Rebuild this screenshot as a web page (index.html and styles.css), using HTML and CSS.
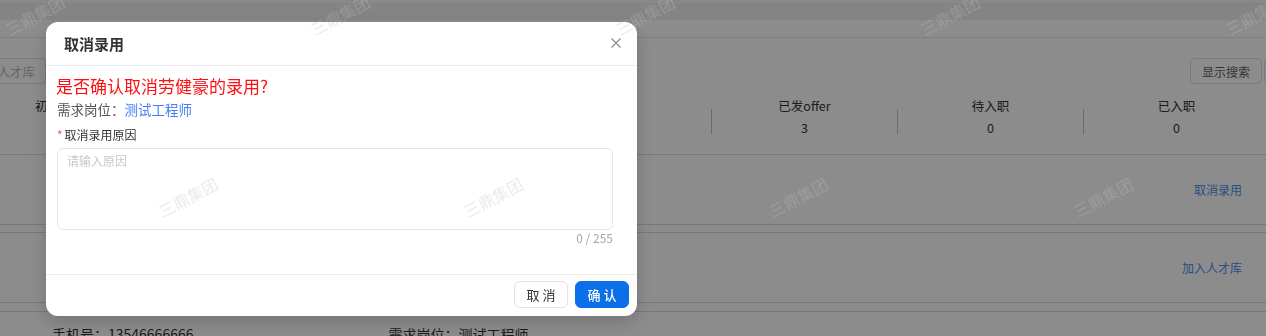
FILE: index.html
```html
<!doctype html>
<html>

<head>
    <meta charset="utf-8">
    <link rel="stylesheet" href="styles.css">
</head>

<body>
    <div class="page">
        <div class="topbar"></div>
        <div class="crumbs"></div>

        <div class="panel">
            <div class="search-row">
                <div class="search-input"><span>请输入人才库</span></div>
                <div class="search-tools">
                    <button class="btn-plain">显示搜索</button>
                    <button class="btn-plain">刷新</button>
                </div>
            </div>
            <div class="stats">
                <div class="stat">
                    <div class="stat-body"><div class="stat-label">初筛通过</div><div class="stat-num">5</div></div>
                </div>
                <div class="stat">
                    <span class="stat-line"></span>
                    <div class="stat-body"><div class="stat-label">复试通过</div><div class="stat-num">4</div></div>
                </div>
                <div class="stat">
                    <span class="stat-line"></span>
                    <div class="stat-body"><div class="stat-label">终试通过</div><div class="stat-num">3</div></div>
                </div>
                <div class="stat">
                    <span class="stat-line"></span>
                    <div class="stat-body"><div class="stat-label">面试</div><div class="stat-num">0</div></div>
                </div>
                <div class="stat">
                    <span class="stat-line"></span>
                    <div class="stat-body"><div class="stat-label">已发offer</div><div class="stat-num">3</div></div>
                </div>
                <div class="stat">
                    <span class="stat-line"></span>
                    <div class="stat-body"><div class="stat-label">待入职</div><div class="stat-num">0</div></div>
                </div>
                <div class="stat">
                    <span class="stat-line"></span>
                    <div class="stat-body"><div class="stat-label">已入职</div><div class="stat-num">0</div></div>
                </div>
            </div>
        </div>

        <div class="card">
            <a class="card-link">取消录用</a>
        </div>
        <div class="card">
            <a class="card-link">加入人才库</a>
        </div>
        <div class="card card-info">
            <span class="info-phone">手机号：13546666666</span>
            <span class="info-job">需求岗位：测试工程师</span>
        </div>
    </div>

    <div class="mask"></div>

    <div class="dialog">
        <div class="dialog-head">
            <span class="dialog-title">取消录用</span>
            <svg class="dialog-close" width="10" height="10" viewBox="0 0 10 10">
                <path d="M0.5 0.5 L9.5 9.5 M9.5 0.5 L0.5 9.5" stroke="#8c8c8c" stroke-width="1.2" fill="none" />
            </svg>
        </div>
        <div class="dialog-body">
            <div class="confirm-title">是否确认取消劳健豪的录用?</div>
            <div class="confirm-job">需求岗位：<span class="job-name">测试工程师</span></div>
            <div class="field-label"><span class="required">*</span>取消录用原因</div>
            <textarea class="reason" placeholder="请输入原因"></textarea>
            <div class="counter">0 / 255</div>
        </div>
        <div class="dialog-foot">
            <button class="btn-cancel">取 消</button>
            <button class="btn-ok">确 认</button>
        </div>
    </div>

    <div class="watermark">
        <span class="wm" style="left: 3px; top: 5px">三鼎集团</span>
        <span class="wm" style="left: 308px; top: 5px">三鼎集团</span>
        <span class="wm" style="left: 613px; top: 5px">三鼎集团</span>
        <span class="wm" style="left: 918px; top: 5px">三鼎集团</span>
        <span class="wm" style="left: 1223px; top: 5px">三鼎集团</span>
        <span class="wm" style="left: -149px; top: 187px">三鼎集团</span>
        <span class="wm" style="left: 156px; top: 187px">三鼎集团</span>
        <span class="wm" style="left: 461px; top: 187px">三鼎集团</span>
        <span class="wm" style="left: 766px; top: 187px">三鼎集团</span>
        <span class="wm" style="left: 1071px; top: 187px">三鼎集团</span>
    </div>
</body>

</html>
```

FILE: styles.css
```css
* {
    box-sizing: border-box;
    margin: 0;
    padding: 0;
}

html,
body {
    width: 1266px;
    height: 336px;
    overflow: hidden;
}

body {
    font-family: "Noto Sans CJK SC", "Noto Sans", sans-serif;
    color: #333;
    background: #fff;
    font-size: 12.5px;
}

/* page under the mask */

.page {
    width: 1266px;
}

.topbar {
    height: 20px;
    border-top: 3px solid #fafafa;
    background: #eff0f2;
}

.crumbs {
    height: 18px;
    border-bottom: 1px solid #e6e6e6;
}

.panel {
    padding-top: 20px;
    padding-bottom: 16px;
    border-bottom: 1px solid #dcdcdc;
}

.search-row {
    display: flex;
    justify-content: space-between;
    height: 26px;
    margin-left: -15px;
    margin-right: -40px;
}

.search-input {
    width: 61px;
    height: 26px;
    border: 1px solid #dcdfe6;
    border-radius: 4px;
    display: flex;
    justify-content: flex-end;
    align-items: center;
    overflow: hidden;
    padding-right: 10px;
    color: #b8b8b8;
    font-size: 12.5px;
    white-space: nowrap;
}

.search-tools {
    display: flex;
    gap: 2px;
}

.btn-plain {
    width: 72px;
    height: 26px;
    border: 1px solid #dcdfe6;
    border-radius: 5px;
    background: #fff;
    color: #606266;
    font-family: inherit;
    font-size: 12px;
}

.search-tools .btn-plain + .btn-plain {
    width: 42px;
}

.stats {
    display: grid;
    grid-template-columns: repeat(7, 186px);
    margin-left: -33px;
    margin-top: 12px;
}

.stat {
    display: flex;
    align-items: center;
}

.stat-line {
    width: 1px;
    height: 25px;
    background: #c4c4c4;
    margin-top: 8px;
}

.stat-body {
    flex: 1;
    text-align: center;
}

.stat-label {
    line-height: 20px;
    color: #333;
}

.stat-num {
    line-height: 20px;
    margin-top: 2px;
    color: #333;
}

.card {
    height: 70px;
    border-bottom: 1px solid #dadada;
    display: flex;
    justify-content: flex-end;
    align-items: center;
    padding-right: 24px;
}

.card + .card {
    height: 71px;
    border-top: 1px solid #dadada;
    margin-top: 7px;
}

.card-link {
    color: #4d8ef0;
    font-size: 12px;
    cursor: pointer;
}

.card.card-info {
    justify-content: flex-start;
    align-items: flex-start;
    padding: 12px 0 0 52px;
    font-size: 14px;
    color: #333;
    margin-top: 8px;
}

.info-job {
    margin-left: 195px;
}

/* modal */

.mask {
    position: fixed;
    inset: 0;
    background: rgba(0, 0, 0, 0.45);
}

.dialog {
    position: fixed;
    left: 46px;
    top: 22px;
    width: 591px;
    height: 294px;
    background: #fff;
    border-radius: 12px;
    box-shadow: 0 6px 18px rgba(0, 0, 0, 0.18);
    display: flex;
    flex-direction: column;
}

.dialog-head {
    height: 44px;
    border-bottom: 1px solid #ebebeb;
    display: flex;
    align-items: center;
    justify-content: space-between;
    padding: 0 16px 0 18px;
}

.dialog-title {
    font-size: 15px;
    font-weight: bold;
    color: #333;
}

.dialog-close {
    display: block;
    margin-top: -2px;
}

.dialog-body {
    flex: 1;
    padding: 8px 24px 0 11px;
}

.confirm-title {
    font-size: 17px;
    line-height: 24px;
    color: #ff1010;
    margin-left: -1px;
}

.confirm-job {
    font-size: 13.5px;
    line-height: 20px;
    color: #555;
    margin-top: 1px;
}

.job-name {
    color: #3f7ef4;
}

.field-label {
    font-size: 12px;
    line-height: 18px;
    margin-top: 7px;
    color: #333;
}

.required {
    color: #f5576c;
    margin-right: 2px;
}

.reason {
    display: block;
    width: 100%;
    height: 82px;
    margin-top: 4px;
    border: 1px solid #e6e6e6;
    border-radius: 6px;
    padding: 4px 9px;
    resize: none;
    outline: none;
    font-family: inherit;
    font-size: 12px;
    line-height: 16px;
    color: #333;
}

.reason::placeholder {
    color: #c8c8c8;
}

.counter {
    text-align: right;
    font-size: 12px;
    line-height: 16px;
    color: #a8a8a8;
}

.dialog-foot {
    height: 42px;
    border-top: 1px solid #ebebeb;
    display: flex;
    justify-content: flex-end;
    align-items: flex-start;
    gap: 7px;
    padding: 6px 8px 0 0;
}

.btn-cancel,
.btn-ok {
    height: 27px;
    width: 54px;
    border-radius: 6px;
    font-family: inherit;
    font-size: 13px;
    cursor: pointer;
}

.btn-cancel {
    background: #fff;
    border: 1px solid #e3e3e3;
    color: #333;
}

.btn-ok {
    background: #0a6fe8;
    border: 1px solid #0a6fe8;
    color: #fff;
    font-weight: 500;
}

/* watermark */

.watermark {
    position: fixed;
    inset: 0;
    pointer-events: none;
}

.wm {
    position: absolute;
    width: 64px;
    text-align: center;
    font-size: 16px;
    line-height: 20px;
    color: rgba(190, 190, 190, 0.32);
    transform: rotate(-28deg);
    white-space: nowrap;
}
```
